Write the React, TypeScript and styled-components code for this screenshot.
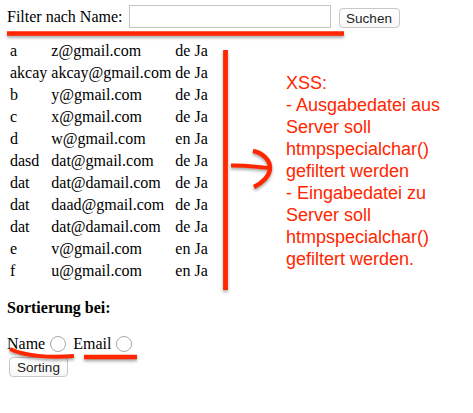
import React from 'react';
import styled, { createGlobalStyle } from 'styled-components';

const GlobalStyle = createGlobalStyle`
  html, body {
    margin: 0;
    padding: 0;
    background: #fff;
  }
  body {
    font-family: "Liberation Serif", "Times New Roman", serif;
    font-size: 16px;
    color: #000;
    overflow: hidden;
  }
`;

const Page = styled.div`
  position: relative;
  width: 473px;
  height: 413px;
  padding: 5px 0 0 7px;
  box-sizing: border-box;
`;

const FilterForm = styled.form`
  display: flex;
  align-items: center;
  height: 23px;
  margin-bottom: 11px;
`;

const FilterLabel = styled.label`
  margin-right: 6px;
`;

const NameInput = styled.input`
  width: 202px;
  height: 23px;
  box-sizing: border-box;
  border: 1px solid #c4c4c4;
  background: #fff;
  padding: 0 3px;
  margin: 0 8px 0 0;
  outline: none;
`;

const GreyButton = styled.button<{ $width: number }>`
  width: ${(p) => p.$width}px;
  height: 20px;
  box-sizing: border-box;
  padding: 0;
  border: 1px solid #c8c8c8;
  border-radius: 4px;
  background: linear-gradient(#fff, #f8f8f8);
  font-family: "Liberation Sans", Arial, sans-serif;
  font-size: 13.5px;
  color: #222;
`;

const SearchButton = styled(GreyButton)`
  margin-top: 3px;
`;

const UserTable = styled.table`
  border-spacing: 2px;
  border-collapse: separate;
`;

const Cell = styled.td`
  padding: 1px;
  line-height: 18px;
  white-space: nowrap;
`;

const SortHeading = styled.h4`
  font-size: 16px;
  font-weight: bold;
  line-height: 18px;
  margin: 16px 0 18px;
`;

const SortRow = styled.div`
  display: flex;
  align-items: center;
  height: 18px;
  margin-top: 8px;
`;

const SortLabel = styled.label`
  line-height: 18px;
`;

const Radio = styled.span`
  width: 14px;
  height: 14px;
  border: 1px solid #a8a8a8;
  border-radius: 50%;
  background: #fff;
  margin: 0 7px 0 5px;
  flex: none;
`;

const SortButton = styled(GreyButton)`
  display: block;
  margin: 4px 0 0 2px;
`;

const Annotations = styled.svg`
  position: absolute;
  left: 0;
  top: 0;
  pointer-events: none;
  filter: drop-shadow(0 2px 1.5px rgba(0, 0, 0, 0.35));
`;

const Note = styled.div`
  position: absolute;
  left: 286px;
  top: 72px;
  width: 180px;
  font-family: "Liberation Sans", Arial, sans-serif;
  font-size: 18px;
  line-height: 22px;
  color: #ff2600;
`;

const rows = [
  ['a', 'z@gmail.com', 'de Ja'],
  ['akcay', 'akcay@gmail.com', 'de Ja'],
  ['b', 'y@gmail.com', 'de Ja'],
  ['c', 'x@gmail.com', 'de Ja'],
  ['d', 'w@gmail.com', 'en Ja'],
  ['dasd', 'dat@gmail.com', 'de Ja'],
  ['dat', 'dat@damail.com', 'de Ja'],
  ['dat', 'daad@gmail.com', 'de Ja'],
  ['dat', 'dat@damail.com', 'de Ja'],
  ['e', 'v@gmail.com', 'en Ja'],
  ['f', 'u@gmail.com', 'en Ja'],
];

const App: React.FC = () => {
  return (
    <Page>
      <GlobalStyle />
      <FilterForm>
        <FilterLabel>Filter nach Name:</FilterLabel>
        <NameInput type="text" />
        <SearchButton type="button" $width={61}>Suchen</SearchButton>
      </FilterForm>

      <UserTable>
        <tbody>
          {rows.map((row, i) => (
            <tr key={i}>
              {row.map((value, j) => (
                <Cell key={j}>{value}</Cell>
              ))}
            </tr>
          ))}
        </tbody>
      </UserTable>

      <SortHeading>Sortierung bei:</SortHeading>
      <SortRow>
        <SortLabel>Name</SortLabel>
        <Radio />
        <SortLabel>Email</SortLabel>
        <Radio />
      </SortRow>
      <SortButton type="button" $width={59}>Sorting</SortButton>

      <Annotations width="473" height="413" viewBox="0 0 473 413" fill="none" stroke="#ff2600">
        <path d="M7 33.5H344" strokeWidth="4.5" />
        <path d="M225.5 50V290" strokeWidth="4.8" />
        <path d="M231 165.5C243 165 256 167 270 168" strokeWidth="4" />
        <path d="M253 151C263 153 270 160 270 168C270 176 262 183 254 187" strokeWidth="4.5" />
        <path d="M10 349C24 356 50 358 74 356" strokeWidth="4" />
        <path d="M84 357H137" strokeWidth="4.5" />
      </Annotations>

      <Note>
        XSS:
        <br />- Ausgabedatei aus
        <br />Server soll
        <br />htmpspecialchar()
        <br />gefiltert werden
        <br />- Eingabedatei zu
        <br />Server soll
        <br />htmpspecialchar()
        <br />gefiltert werden.
      </Note>
    </Page>
  );
};

export default App;
